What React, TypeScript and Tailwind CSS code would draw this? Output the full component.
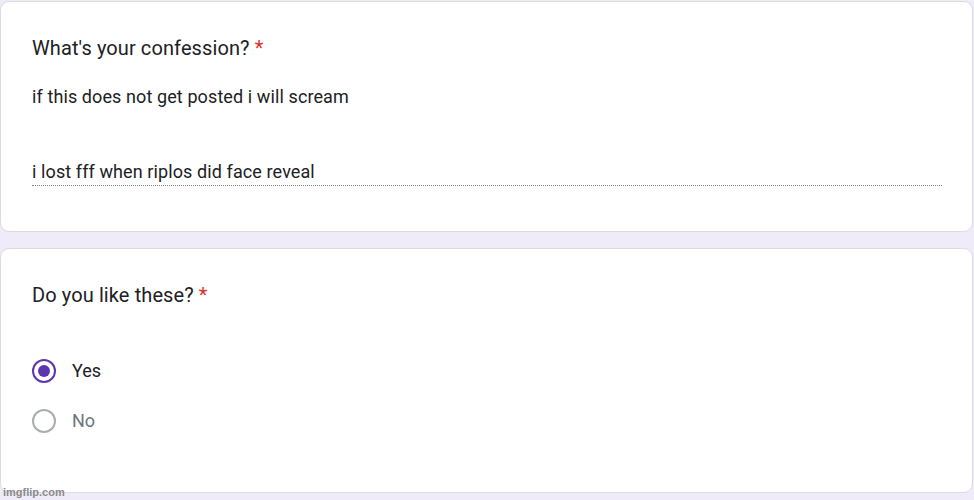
export default function App() {
  return (
    <div className="relative w-[974px] h-[500px] overflow-hidden bg-[#f0ebf8] pt-px font-['Roboto',sans-serif] text-[#202124]">
      <div className="w-[973px] h-[231px] rounded-[9px] border border-[#dadce0] bg-white px-[31px] pt-[33px]">
        <div className="text-[20px] leading-[26px] tracking-[0.1px]">
          What's your confession? <span className="text-[#d93025]">*</span>
        </div>
        <div className="mt-[24px] text-[18px] leading-[24px] tracking-[0.1px]">if this does not get posted i will scream</div>
        <div className="mt-[51px] w-[910px] border-b border-dotted border-[#80868b] pb-[1px] text-[18px] leading-[24px] tracking-[0.1px]">
          i lost fff when riplos did face reveal
        </div>
      </div>
      <div className="mt-[16px] w-[973px] h-[245px] rounded-[9px] border border-[#dadce0] bg-white px-[31px] pt-[33px]">
        <div className="text-[20px] leading-[26px] tracking-[0.1px]">
          Do you like these? <span className="text-[#d93025]">*</span>
        </div>
        <div className="mt-[51px] flex flex-col gap-[26px]">
          <div className="flex items-center gap-[16px]">
            <div className="flex h-6 w-6 items-center justify-center rounded-full border-[2.5px] border-[#5e35b1]">
              <div className="h-3 w-3 rounded-full bg-[#5e35b1]" />
            </div>
            <span className="text-[18px] leading-6">Yes</span>
          </div>
          <div className="flex items-center gap-[16px]">
            <div className="h-6 w-6 rounded-full border-[2.5px] border-[#a9adb2]" />
            <span className="text-[18px] leading-6 text-[#70757a]">No</span>
          </div>
        </div>
      </div>
      <div className="absolute left-[3px] bottom-[2px] text-[11px] font-semibold leading-[12px] text-[#8a8a8a] font-['Liberation_Sans',sans-serif]">
        imgflip.com
      </div>
    </div>
  );
}
